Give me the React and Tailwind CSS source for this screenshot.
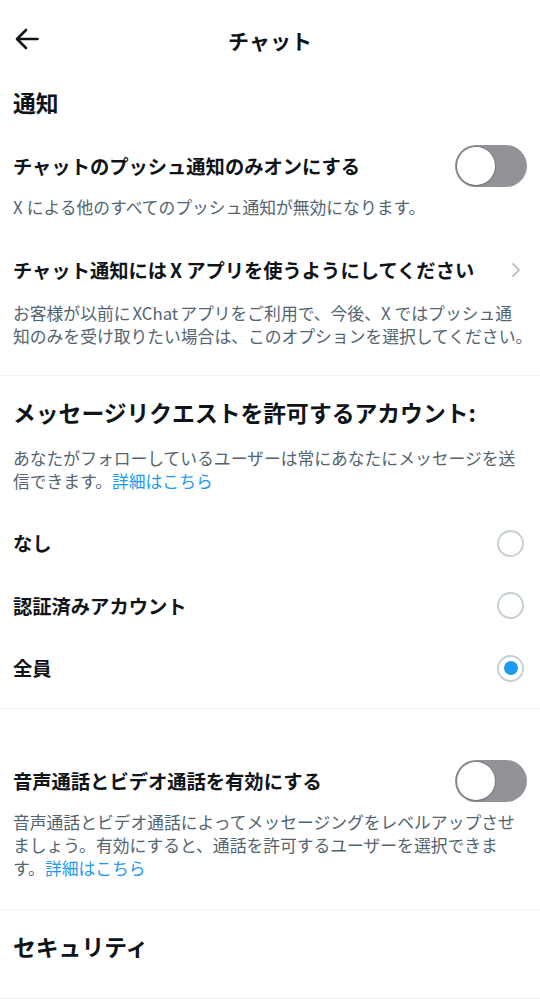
import { useState } from "react";

const font = { fontFamily: '"Noto Sans CJK JP", "Noto Sans", sans-serif' };

function Toggle({ on, onChange }) {
  return (
    <button
      type="button"
      onClick={() => onChange(!on)}
      className={[
        "relative h-[42px] w-[72px] shrink-0 rounded-full",
        on ? "bg-[#1d9bf0]" : "bg-[#929298]",
      ].join(" ")}
    >
      <span
        className={[
          "absolute top-[2px] h-[38px] w-[38px] rounded-full bg-white shadow-[0_0_0_1px_rgba(0,0,0,0.1),0_1px_3px_rgba(0,0,0,0.15)]",
          on ? "left-[32px]" : "left-[2px]",
        ].join(" ")}
      />
    </button>
  );
}

function Radio({ checked }) {
  return (
    <span className="flex h-[27px] w-[27px] items-center justify-center rounded-full border-[2.5px] border-[#c5d0d7]">
      {checked ? <span className="h-[14px] w-[14px] rounded-full bg-[#1d9bf0]" /> : null}
    </span>
  );
}

function Divider() {
  return <div className="h-px w-full bg-[#eff3f4]" />;
}

// latin X gets a little air around it, like the iOS text does
function X({ before, after = true }) {
  return <span className={[before ? "ml-[3px]" : "", after ? "mr-[4px]" : ""].join(" ")}>X</span>;
}

export default function App() {
  const [chatOnly, setChatOnly] = useState(false);
  const [calls, setCalls] = useState(false);
  const [who, setWho] = useState("all");

  const options = [
    { id: "none", label: "なし" },
    { id: "verified", label: "認証済みアカウント" },
    { id: "all", label: "全員" },
  ];

  return (
    <div className="min-h-screen w-full bg-white text-[#0f1419]" style={font}>
      {/* header */}
      <div className="grid h-[80px] grid-cols-[1fr_auto_1fr] items-center px-[15px]">
        <svg width="24" height="22" viewBox="0 0 24 22" fill="none" className="mb-[2px]">
          <path
            d="M22.5 11H2.5M11 2L2 11L11 20"
            stroke="#0f1419"
            strokeWidth="2.6"
            strokeLinecap="round"
            strokeLinejoin="round"
          />
        </svg>
        <h1 className="text-[21px] font-bold leading-[28px]">チャット</h1>
        <div />
      </div>

      {/* 通知 */}
      <div className="px-[13px]">
        <h2 className="flex h-[46px] items-center text-[22.8px] font-bold leading-[28px]">通知</h2>

        <div className="mt-[19px] flex h-[42px] items-center justify-between">
          <span className="text-[19.3px] font-bold leading-[24px]">チャットのプッシュ通知のみオンにする</span>
          <Toggle on={chatOnly} onChange={setChatOnly} />
        </div>
        <p className="mt-[9px] whitespace-nowrap text-[16.8px] leading-[23px] text-[#536471]">
          <X />による他のすべてのプッシュ通知が無効になります。
        </p>

        <div className="mt-[39px] flex h-[24px] items-center justify-between">
          <span className="whitespace-nowrap text-[19.3px] font-bold leading-[24px]">
            チャット通知には<X before />アプリを使うようにしてください
          </span>
          <svg width="10" height="16" viewBox="0 0 10 16" fill="none" className="mr-[6px] shrink-0">
            <path d="M2 2L8 8L2 14" stroke="#b9c3ca" strokeWidth="1.8" strokeLinecap="round" strokeLinejoin="round" />
          </svg>
        </div>
        <p className="mt-[19.5px] text-[16.8px] leading-[23px] text-[#536471]">
          <span className="block whitespace-nowrap">
            お客様が以前に<span className="mx-[2px]">XChat</span>アプリをご利用で、今後、<X />ではプッシュ通
          </span>
          <span className="block whitespace-nowrap">知のみを受け取りたい場合は、このオプションを選択してください。</span>
        </p>
      </div>
      <div className="mt-[27.5px]">
        <Divider />
      </div>

      {/* メッセージリクエスト */}
      <div className="px-[13px] pt-[23px]">
        <h2 className="whitespace-nowrap text-[22.8px] font-bold leading-[28px]">
          メッセージリクエストを許可するアカウント:
        </h2>
        <p className="mt-[19.5px] text-[16.8px] leading-[23px] text-[#536471]">
          <span className="block whitespace-nowrap">あなたがフォローしているユーザーは常にあなたにメッセージを送</span>
          <span className="block whitespace-nowrap">
            信できます。<a className="text-[#1d9bf0]">詳細はこちら</a>
          </span>
        </p>
        <div className="mt-[19.25px]">
          {options.map((o) => (
            <button
              key={o.id}
              type="button"
              onClick={() => setWho(o.id)}
              className="flex h-[62.5px] w-full items-center justify-between"
            >
              <span className="text-[19.3px] font-bold leading-[24px]">{o.label}</span>
              <span className="mr-[3px]">
                <Radio checked={who === o.id} />
              </span>
            </button>
          ))}
        </div>
      </div>
      <div className="mt-[8.75px]">
        <Divider />
      </div>

      {/* 通話 */}
      <div className="px-[13px] pt-[51px]">
        <div className="flex h-[42px] items-center justify-between">
          <span className="text-[19.3px] font-bold leading-[24px]">音声通話とビデオ通話を有効にする</span>
          <Toggle on={calls} onChange={setCalls} />
        </div>
        <p className="mt-[9px] text-[16.8px] leading-[23px] text-[#536471]">
          <span className="block whitespace-nowrap">音声通話とビデオ通話によってメッセージングをレベルアップさせ</span>
          <span className="block whitespace-nowrap">ましょう。有効にすると、通話を許可するユーザーを選択できま</span>
          <span className="block whitespace-nowrap">
            す。<a className="text-[#1d9bf0]">詳細はこちら</a>
          </span>
        </p>
      </div>
      <div className="mt-[28.5px]">
        <Divider />
      </div>

      {/* セキュリティ */}
      <div className="px-[13px] pt-[23px] pb-[37px]">
        <h2 className="text-[22.8px] font-bold leading-[28px]">セキュリティ</h2>
      </div>
      <Divider />
    </div>
  );
}
